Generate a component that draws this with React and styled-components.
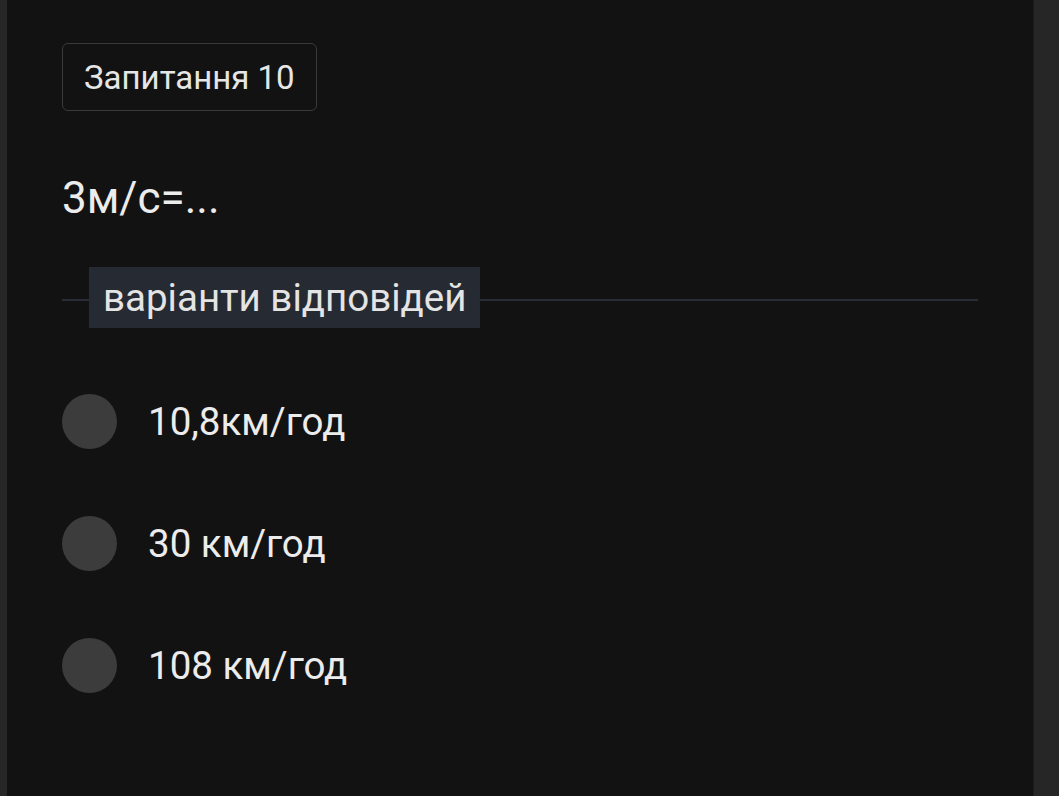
import styled, { createGlobalStyle } from "styled-components";

const Global = createGlobalStyle`
  html, body {
    margin: 0;
    padding: 0;
    background: #121212;
  }
  body {
    font-family: Roboto, "Noto Sans", "Liberation Sans", sans-serif;
    color: #e8e8e8;
  }
`;

const Page = styled.div`
  display: flex;
  width: 100vw;
  height: 100vh;
  overflow: hidden;
`;

const EdgeLeft = styled.div`
  width: 7px;
  background: #272727;
`;

const EdgeRight = styled.div`
  width: 25px;
  background: #262626;
  border-left: 1px solid #1c1c1c;
`;

const Main = styled.div`
  flex: 1;
  background: #121212;
  padding: 43px 55px 0 55px;
  display: flex;
  flex-direction: column;
  align-items: flex-start;
`;

const Badge = styled.div`
  height: 66px;
  padding: 0 21px;
  display: flex;
  align-items: center;
  border: 1px solid #3a3a3a;
  border-radius: 6px;
  font-size: 33px;
  color: #e6e6e6;
`;

const Question = styled.div`
  margin-top: 60px;
  font-size: 44px;
  line-height: 54px;
  color: #ececec;
`;

const Divider = styled.div`
  margin-top: 42px;
  width: 100%;
  display: flex;
  align-items: center;
  &::before,
  &::after {
    content: "";
    height: 2px;
    margin-top: 5px;
    background: #2a2d35;
  }
  &::before {
    width: 27px;
  }
  &::after {
    flex: 1;
  }
`;

const DividerLabel = styled.div`
  background: #262a33;
  height: 61px;
  padding: 0 14px;
  display: flex;
  align-items: center;
  font-size: 38.5px;
  color: #e4e4e4;
`;

const Options = styled.div`
  margin-top: 66px;
  display: flex;
  flex-direction: column;
  gap: 67px;
`;

const Option = styled.label`
  display: flex;
  align-items: center;
  gap: 31px;
  height: 55px;
  font-size: 38.5px;
  color: #ececec;
`;

const Radio = styled.span`
  width: 55px;
  height: 55px;
  border-radius: 50%;
  background: #3c3c3c;
  flex-shrink: 0;
`;

const answers = ["10,8км/год", "30 км/год", "108 км/год"];

export default function App() {
  return (
    <Page>
      <Global />
      <EdgeLeft />
      <Main>
        <Badge>Запитання 10</Badge>
        <Question>3м/с=...</Question>
        <Divider>
          <DividerLabel>варіанти відповідей</DividerLabel>
        </Divider>
        <Options>
          {answers.map((a) => (
            <Option key={a}>
              <Radio />
              {a}
            </Option>
          ))}
        </Options>
      </Main>
      <EdgeRight />
    </Page>
  );
}
